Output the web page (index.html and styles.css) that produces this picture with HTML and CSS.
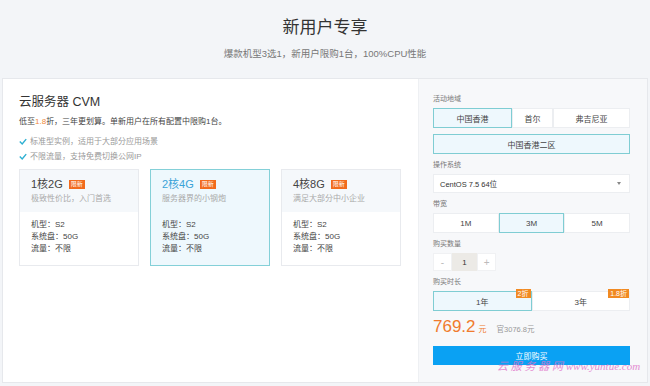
FILE: index.html
```html
<!DOCTYPE html>
<html lang="zh">
<head>
<meta charset="utf-8">
<link rel="stylesheet" href="styles.css">
</head>
<body>
<header class="hero">
  <h1 class="hero-title">新用户专享</h1>
  <p class="hero-sub">爆款机型3选1，新用户限购1台，100%CPU性能</p>
</header>
<main class="panel">
  <section class="left">
    <h2 class="prod-title">云服务器 CVM</h2>
    <p class="prod-desc">低至<span class="hl">1.8</span>折，三年更划算。单新用户在所有配置中限购1台。</p>
    <ul class="checks">
      <li><svg class="tick" viewBox="0 0 10 8"><path d="M1 4 L4 7 L9 1" fill="none" stroke="#2eb0d2" stroke-width="1.8"/></svg>标准型实例，适用于大部分应用场景</li>
      <li><svg class="tick" viewBox="0 0 10 8"><path d="M1 4 L4 7 L9 1" fill="none" stroke="#2eb0d2" stroke-width="1.8"/></svg>不限流量，支持免费切换公网IP</li>
    </ul>
    <div class="cards">
      <div class="card">
        <div class="card-head">
          <div class="card-title">1核2G <span class="tag">限新</span></div>
          <div class="card-sub">极致性价比，入门首选</div>
        </div>
        <div class="card-body">
          <div>机型：S2</div>
          <div>系统盘：50G</div>
          <div>流量：不限</div>
        </div>
      </div>
      <div class="card active">
        <div class="card-head">
          <div class="card-title">2核4G <span class="tag">限新</span></div>
          <div class="card-sub">服务器界的小钢炮</div>
        </div>
        <div class="card-body">
          <div>机型：S2</div>
          <div>系统盘：50G</div>
          <div>流量：不限</div>
        </div>
      </div>
      <div class="card">
        <div class="card-head">
          <div class="card-title">4核8G <span class="tag">限新</span></div>
          <div class="card-sub">满足大部分中小企业</div>
        </div>
        <div class="card-body">
          <div>机型：S2</div>
          <div>系统盘：50G</div>
          <div>流量：不限</div>
        </div>
      </div>
    </div>
  </section>
  <aside class="right">
    <div class="label">活动地域</div>
    <div class="seg">
      <div class="opt active w78">中国香港</div>
      <div class="opt w41">首尔</div>
      <div class="opt grow">弗吉尼亚</div>
    </div>
    <div class="seg">
      <div class="opt active grow">中国香港二区</div>
    </div>
    <div class="label">操作系统</div>
    <div class="select">
      <span>CentOS 7.5 64位</span>
      <span class="caret"></span>
    </div>
    <div class="label">带宽</div>
    <div class="seg">
      <div class="opt grow">1M</div>
      <div class="opt active grow">3M</div>
      <div class="opt grow">5M</div>
    </div>
    <div class="label">购买数量</div>
    <div class="stepper">
      <div class="st-btn">-</div>
      <div class="st-val">1</div>
      <div class="st-btn">+</div>
    </div>
    <div class="label">购买时长</div>
    <div class="seg dur">
      <div class="opt active grow">1年<span class="badge">2折</span></div>
      <div class="opt grow">3年<span class="badge">1.8折</span></div>
    </div>
    <div class="price-row">
      <span class="price">769.2</span><span class="yuan">元</span>
      <span class="orig">官3076.8元</span>
    </div>
    <div class="buy">立即购买</div>
    <div class="watermark">云 服 务 器 网 www.yuntue.com</div>
  </aside>
</main>
</body>
</html>
```
FILE: styles.css
```css
* { box-sizing: border-box; margin: 0; padding: 0; }
html, body { width: 650px; height: 386px; overflow: hidden; }
body {
  background: #f3f5f8;
  font-family: "Liberation Sans", "Noto Sans CJK SC", sans-serif;
  color: #333;
}
.hero { height: 78px; text-align: center; padding-top: 16px; }
.hero-title { font-size: 17px; font-weight: 400; color: #333; line-height: 24px; }
.hero-sub { font-size: 9.5px; color: #777; line-height: 13px; margin-top: 7px; }

.panel {
  margin: 0 2px;
  height: 305px;
  display: flex;
  background: #fff;
  border: 1px solid #e6e8ec;
  position: relative;
}
.left { flex: 1; padding: 15px 0 0 16px; }
.prod-title { font-size: 12.5px; font-weight: 400; line-height: 16px; color: #333; }
.prod-desc { font-size: 8px; line-height: 12px; margin-top: 6px; color: #444; }
.hl { color: #f08a3a; }
.checks { list-style: none; margin-top: 6px; }
.checks li {
  font-size: 8px; color: #999; line-height: 12px; height: 15px;
  display: flex; align-items: center; gap: 3px;
}
.tick { width: 8px; height: 7px; }
.cards { display: flex; gap: 11px; margin-top: 5px; }
.card {
  width: 120px; height: 97px;
  border: 1px solid #e8eaee;
  background: #fff;
}
.card-head { background: #f5f8fb; height: 42px; padding: 7px 0 0 11px; }
.card-title { font-size: 11px; line-height: 14px; color: #444; display: flex; align-items: center; gap: 6px; }
.tag {
  display: inline-block; background: #f26b1d; color: #fff;
  font-size: 6px; line-height: 9px; height: 9px; padding: 0 2px;
}
.card-sub { font-size: 8px; color: #aaa; line-height: 12px; margin-top: 2px; }
.card-body { padding: 7px 0 0 11px; font-size: 8px; line-height: 12px; color: #444; }
.card.active { border-color: #84d0d8; background: #eef8fd; }
.card.active .card-head { background: #eef8fd; }
.card.active .card-title { color: #3aa3d8; }

.right {
  width: 229px;
  background: #f7f8fa;
  border-left: 1px solid #eef0f3;
  padding: 15px 17px 0 14px;
  position: relative;
}
.label { font-size: 7px; color: #777; line-height: 10px; height: 10px; margin: 0 0 4px; }
.seg { display: flex; height: 20px; margin-bottom: 6px; }
.opt {
  display: flex; align-items: center; justify-content: center;
  background: #fff; border: 1px solid #eceef1;
  font-size: 8px; color: #444; position: relative;
}
.opt.active { background: #eef8fd; border-color: #7fcdd3; }
.w78 { width: 79px; }
.w41 { width: 41px; }
.grow { flex: 1; }
.select {
  height: 19px; background: #fff; border: 1px solid #eceef1;
  display: flex; align-items: center; justify-content: space-between;
  padding: 0 8px 0 6px; font-size: 7.5px; color: #333; margin-bottom: 6px;
}
.caret {
  width: 0; height: 0;
  border-left: 2.5px solid transparent; border-right: 2.5px solid transparent;
  border-top: 3px solid #888;
}
.stepper { display: flex; height: 18px; width: 63px; margin-bottom: 6px; }
.st-btn {
  width: 19px; background: #fff; display: flex; align-items: center; justify-content: center;
  color: #bbb; font-size: 10px; border: 1px solid #f0f1f3;
}
.st-val { width: 26px; background: #eceae6; display: flex; align-items: center; justify-content: center; font-size: 8px; color: #333; }
.dur .opt.active { border-color: #7fcdd3; }
.badge {
  position: absolute; top: -3px; right: 0;
  background: #f18a22; color: #fff; font-size: 7px; line-height: 9px; height: 9px; padding: 0 2px;
}
.price-row { display: flex; align-items: baseline; margin-top: 3px; height: 20px; }
.price { font-size: 17px; color: #f07b2d; line-height: 20px; }
.yuan { font-size: 8px; color: #f07b2d; margin-left: 3px; }
.orig { font-size: 7.5px; color: #999; margin-left: 10px; }
.buy {
  margin-top: 9px; height: 19px; background: #0aa1f3; color: #fff;
  font-size: 8px; display: flex; align-items: center; justify-content: center;
}
.watermark {
  position: absolute; left: 78px; top: 278px;
  font-family: "Liberation Serif", "Noto Sans CJK SC", serif;
  font-style: italic; font-size: 11px; color: #e070c8; white-space: nowrap; opacity: 0.8;
}
```
